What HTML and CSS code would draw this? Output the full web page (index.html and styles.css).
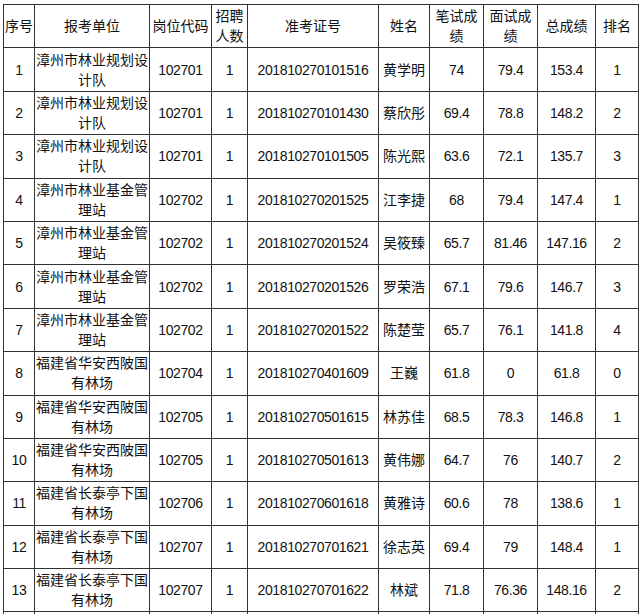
FILE: index.html
```html
<!DOCTYPE html>
<html lang="zh-CN">
<head>
<meta charset="utf-8">
<title>成绩表</title>
<link rel="stylesheet" href="styles.css">
</head>
<body>
<table class="grid">
<colgroup>
<col class="c1"><col class="c2"><col class="c3"><col class="c4"><col class="c5"><col class="c6"><col class="c7"><col class="c8"><col class="c9"><col class="c10">
</colgroup>
<thead>
<tr><th>序号</th><th>报考单位</th><th>岗位代码</th><th>招聘人数</th><th>准考证号</th><th>姓名</th><th>笔试成绩</th><th>面试成绩</th><th>总成绩</th><th>排名</th></tr>
</thead>
<tbody>
<tr><td>1</td><td class="cn">漳州市林业规划设计队</td><td>102701</td><td>1</td><td>201810270101516</td><td class="cn">黄学明</td><td>74</td><td>79.4</td><td>153.4</td><td>1</td></tr>
<tr><td>2</td><td class="cn">漳州市林业规划设计队</td><td>102701</td><td>1</td><td>201810270101430</td><td class="cn">蔡欣彤</td><td>69.4</td><td>78.8</td><td>148.2</td><td>2</td></tr>
<tr><td>3</td><td class="cn">漳州市林业规划设计队</td><td>102701</td><td>1</td><td>201810270101505</td><td class="cn">陈光熙</td><td>63.6</td><td>72.1</td><td>135.7</td><td>3</td></tr>
<tr><td>4</td><td class="cn">漳州市林业基金管理站</td><td>102702</td><td>1</td><td>201810270201525</td><td class="cn">江李捷</td><td>68</td><td>79.4</td><td>147.4</td><td>1</td></tr>
<tr><td>5</td><td class="cn">漳州市林业基金管理站</td><td>102702</td><td>1</td><td>201810270201524</td><td class="cn">吴筱臻</td><td>65.7</td><td>81.46</td><td>147.16</td><td>2</td></tr>
<tr><td>6</td><td class="cn">漳州市林业基金管理站</td><td>102702</td><td>1</td><td>201810270201526</td><td class="cn">罗荣浩</td><td>67.1</td><td>79.6</td><td>146.7</td><td>3</td></tr>
<tr><td>7</td><td class="cn">漳州市林业基金管理站</td><td>102702</td><td>1</td><td>201810270201522</td><td class="cn">陈楚莹</td><td>65.7</td><td>76.1</td><td>141.8</td><td>4</td></tr>
<tr><td>8</td><td class="cn">福建省华安西陂国有林场</td><td>102704</td><td>1</td><td>201810270401609</td><td class="cn">王巍</td><td>61.8</td><td>0</td><td>61.8</td><td>0</td></tr>
<tr><td>9</td><td class="cn">福建省华安西陂国有林场</td><td>102705</td><td>1</td><td>201810270501615</td><td class="cn">林苏佳</td><td>68.5</td><td>78.3</td><td>146.8</td><td>1</td></tr>
<tr><td>10</td><td class="cn">福建省华安西陂国有林场</td><td>102705</td><td>1</td><td>201810270501613</td><td class="cn">黄伟娜</td><td>64.7</td><td>76</td><td>140.7</td><td>2</td></tr>
<tr><td>11</td><td class="cn">福建省长泰亭下国有林场</td><td>102706</td><td>1</td><td>201810270601618</td><td class="cn">黄雅诗</td><td>60.6</td><td>78</td><td>138.6</td><td>1</td></tr>
<tr><td>12</td><td class="cn">福建省长泰亭下国有林场</td><td>102707</td><td>1</td><td>201810270701621</td><td class="cn">徐志英</td><td>69.4</td><td>79</td><td>148.4</td><td>1</td></tr>
<tr><td>13</td><td class="cn">福建省长泰亭下国有林场</td><td>102707</td><td>1</td><td>201810270701622</td><td class="cn">林斌</td><td>71.8</td><td>76.36</td><td>148.16</td><td>2</td></tr>
<tr class="tail"><td></td><td class="cn"></td><td></td><td></td><td></td><td class="cn"></td><td></td><td></td><td></td><td></td></tr>
</tbody>
</table>
</body>
</html>
```
FILE: styles.css
```css
html, body {
  margin: 0;
  padding: 0;
  background: #ffffff;
}

html {
  height: 614px;
  overflow: hidden;
}

body {
  padding: 4px 0 0 3px;
  overflow: hidden;
  height: 614px;
  box-sizing: border-box;
}

.grid {
  border-collapse: collapse;
  table-layout: fixed;
  width: 635px;
  font-family: "Liberation Sans", "Noto Sans CJK SC", sans-serif;
  font-size: 14px;
  line-height: 20px;
  color: #111111;
}

.c1 { width: 31px; }
.c2 { width: 115px; }
.c3 { width: 62px; }
.c4 { width: 36px; }
.c5 { width: 131px; }
.c6 { width: 51px; }
.c7 { width: 54px; }
.c8 { width: 54px; }
.c9 { width: 58px; }
.c10 { width: 43px; }

.grid tr {
  height: 43.4px;
}

.grid tr.tail {
  height: 4px;
}

.grid th,
.grid td {
  border: 1px solid #333333;
  padding: 0;
  text-align: center;
  vertical-align: middle;
  font-weight: normal;
  word-break: break-all;
}

.grid td {
  letter-spacing: -0.4px;
}

.grid td.cn {
  letter-spacing: 0;
}
```
